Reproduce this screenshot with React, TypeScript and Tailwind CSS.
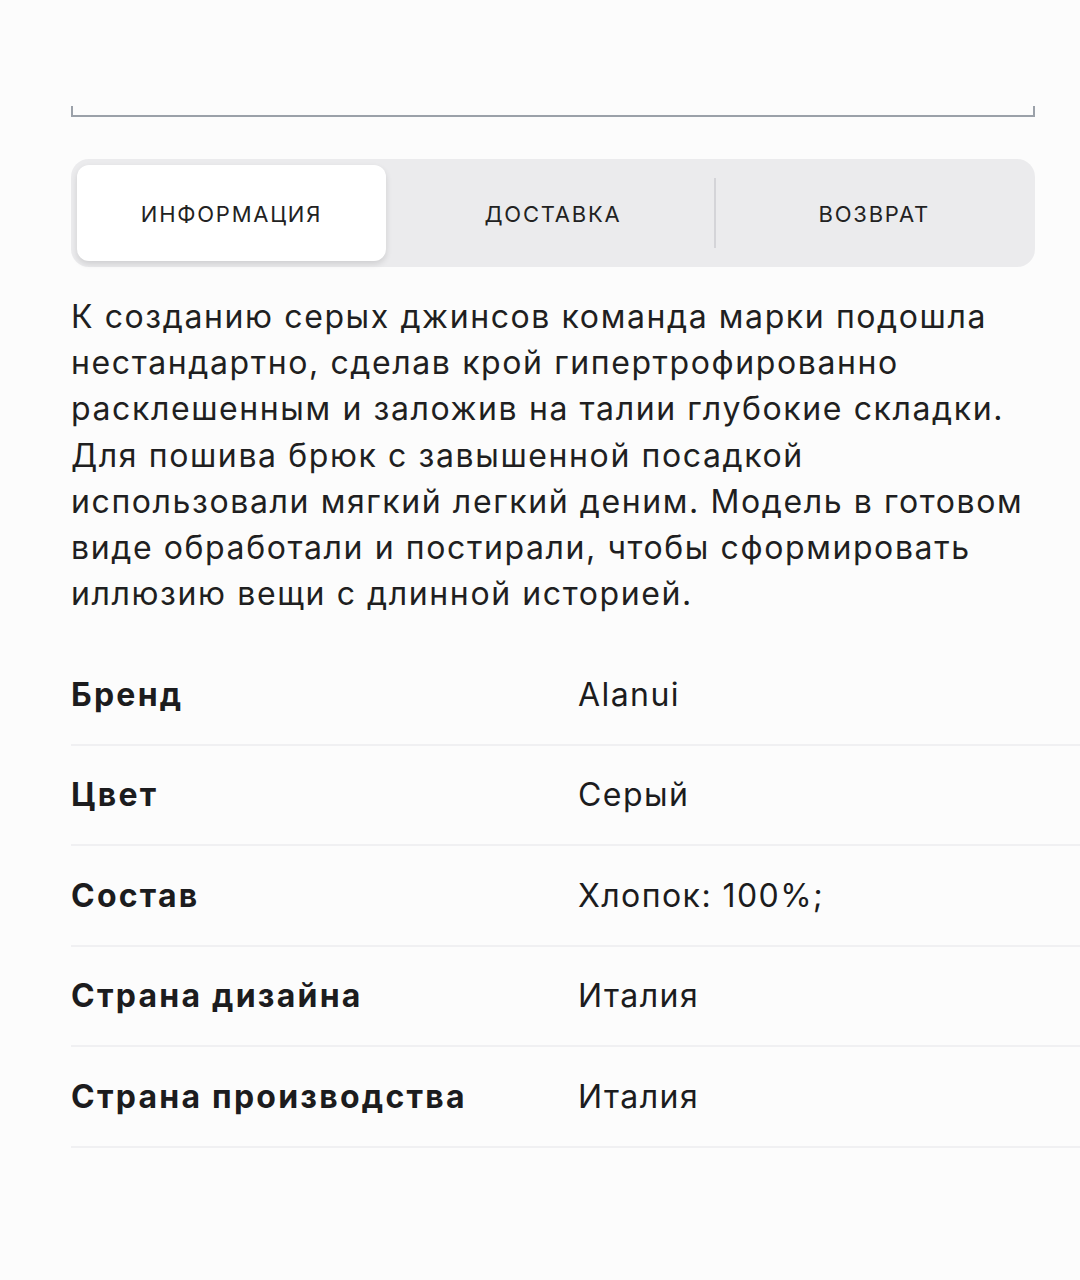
import React from 'react';

const tabs = ['ИНФОРМАЦИЯ', 'ДОСТАВКА', 'ВОЗВРАТ'];

const specs: [string, string][] = [
  ['Бренд', 'Alanui'],
  ['Цвет', 'Серый'],
  ['Состав', 'Хлопок: 100%;'],
  ['Страна дизайна', 'Италия'],
  ['Страна производства', 'Италия'],
];

const lines = [
  'К созданию серых джинсов команда марки подошла',
  'нестандартно, сделав крой гипертрофированно',
  'расклешенным и заложив на талии глубокие складки.',
  'Для пошива брюк с завышенной посадкой',
  'использовали мягкий легкий деним. Модель в готовом',
  'виде обработали и постирали, чтобы сформировать',
  'иллюзию вещи с длинной историей.',
];

export default function App() {
  return (
    <div className="min-h-[1280px] bg-[#fcfcfc] pl-[71px] pt-[106px] text-[#1c1c1e]" style={{ fontFamily: 'Inter, "Noto Sans", sans-serif' }}>
      <div className="w-[964px] h-[11px] border-x-2 border-b-2 border-[#9ba1a9]" />

      <div className="w-[964px] mt-[42px] h-[108px] rounded-[18px] bg-[#ebebed] flex items-stretch">
        {tabs.map((t, i) => (
          <div key={t} className="flex-1 flex items-center relative">
            {i === 2 && <div className="absolute left-[0px] top-[19px] bottom-[19px] w-[2px] bg-[#d4d4d8]" />}
            <div
              className={
                'w-full h-full flex items-center justify-center pt-[3px] text-[22px] tracking-[0.08em] text-[#222] ' +
                (i === 0 ? 'bg-white rounded-[12px] shadow-[0_3px_6px_rgba(0,0,0,0.12)] mx-[6px] my-[6px] !h-[96px] !w-[309px]' : '')
              }
            >
              {t}
            </div>
          </div>
        ))}
      </div>

      <p className="mt-[27px] text-[32px] leading-[46.2px] tracking-[0.05em] text-[#1f1f21]">
        {lines.map((l, i) => (
          <React.Fragment key={i}>
            {l}
            {i < lines.length - 1 && <br />}
          </React.Fragment>
        ))}
      </p>

      <div className="mt-[28px]">
        {specs.map(([k, v]) => (
          <div key={k} className="flex items-center h-[100.5px] border-b-2 border-[#f0f0f2]">
            <div className="w-[507px] text-[32px] font-bold tracking-[0.07em]">{k}</div>
            <div className="text-[32px] tracking-[0.045em]">{v}</div>
          </div>
        ))}
      </div>
    </div>
  );
}
